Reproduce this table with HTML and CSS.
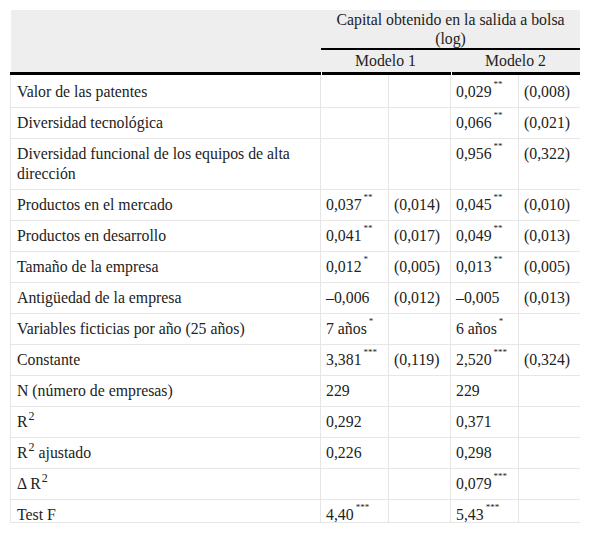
FILE: index.html
```html
<!DOCTYPE html>
<html lang="es">
<head>
<meta charset="utf-8">
<link rel="stylesheet" href="styles.css">
<title>Tabla</title>
</head>
<body>
<div class="wrap">
<table class="tbl">
  <colgroup>
    <col class="c-label"><col class="c-a"><col class="c-b"><col class="c-a"><col class="c-b">
  </colgroup>
  <thead>
    <tr>
      <th class="blank" rowspan="2"></th>
      <th class="group" colspan="4">Capital obtenido en la salida a bolsa<br>(log)</th>
    </tr>
    <tr>
      <th class="model sep" colspan="2">Modelo 1</th>
      <th class="model sep" colspan="2">Modelo 2</th>
    </tr>
  </thead>
  <tbody>
    <tr class="first"><td class="lbl">Valor de las patentes</td><td></td><td></td><td>0,029<sup class="st">**</sup></td><td>(0,008)</td></tr>
    <tr><td class="lbl">Diversidad tecnológica</td><td></td><td></td><td>0,066<sup class="st">**</sup></td><td>(0,021)</td></tr>
    <tr><td class="lbl">Diversidad funcional de los equipos de alta dirección</td><td></td><td></td><td>0,956<sup class="st">**</sup></td><td>(0,322)</td></tr>
    <tr><td class="lbl">Productos en el mercado</td><td>0,037<sup class="st">**</sup></td><td>(0,014)</td><td>0,045<sup class="st">**</sup></td><td>(0,010)</td></tr>
    <tr><td class="lbl">Productos en desarrollo</td><td>0,041<sup class="st">**</sup></td><td>(0,017)</td><td>0,049<sup class="st">**</sup></td><td>(0,013)</td></tr>
    <tr><td class="lbl">Tamaño de la empresa</td><td>0,012<sup class="st">*</sup></td><td>(0,005)</td><td>0,013<sup class="st">**</sup></td><td>(0,005)</td></tr>
    <tr><td class="lbl">Antigüedad de la empresa</td><td>–0,006</td><td>(0,012)</td><td>–0,005</td><td>(0,013)</td></tr>
    <tr><td class="lbl">Variables ficticias por año (25 años)</td><td>7 años<sup class="st">*</sup></td><td></td><td>6 años<sup class="st">*</sup></td><td></td></tr>
    <tr><td class="lbl">Constante</td><td>3,381<sup class="st">***</sup></td><td>(0,119)</td><td>2,520<sup class="st">***</sup></td><td>(0,324)</td></tr>
    <tr><td class="lbl">N (número de empresas)</td><td>229</td><td></td><td>229</td><td></td></tr>
    <tr><td class="lbl">R<sup class="pw">2</sup></td><td>0,292</td><td></td><td>0,371</td><td></td></tr>
    <tr><td class="lbl">R<sup class="pw">2</sup> ajustado</td><td>0,226</td><td></td><td>0,298</td><td></td></tr>
    <tr><td class="lbl">Δ R<sup class="pw">2</sup></td><td></td><td></td><td>0,079<sup class="st">***</sup></td><td></td></tr>
    <tr><td class="lbl">Test F</td><td>4,40<sup class="st">***</sup></td><td></td><td>5,43<sup class="st">***</sup></td><td></td></tr>
  </tbody>
</table>
</div>
</body>
</html>
```

FILE: styles.css
```css
html, body {
  margin: 0;
  padding: 0;
  background: #fff;
}
body {
  padding: 10px;
  font-family: "Liberation Serif", "Times New Roman", serif;
  font-size: 16px;
  color: #222;
}
.wrap {
  width: 570px;
  height: 512px;
  overflow: hidden;
  border-bottom: 1px solid #e6e6e6;
}
.tbl {
  width: 570px;
  table-layout: fixed;
  border-collapse: collapse;
  font-family: "Liberation Serif", "Times New Roman", serif;
  font-size: 15.8px;
}
.c-label { width: 310px; }
.c-a { width: 68px; }
.c-b { width: 62px; }

.tbl thead th {
  background: #eeeeee;
  font-weight: normal;
  text-align: center;
  padding: 0;
  border: none;
}
.tbl th.blank {
  border-bottom: 3px solid #000;
}
.tbl th.group {
  line-height: 19px;
  height: 38px;
  border-bottom: 2px solid #000;
}
.tbl th.model {
  line-height: 20px;
  padding: 1px 0;
  border-bottom: 3px solid #000;
}
.tbl th.sep {
  position: relative;
}
.tbl th.sep::before {
  content: "";
  position: absolute;
  left: 0;
  bottom: -3px;
  width: 1px;
  height: 3px;
  background: #fff;
}
.tbl td {
  border: 1px solid #e6e6e6;
  padding: 5px 5px;
  line-height: 20px;
  text-align: left;
  vertical-align: top;
  white-space: nowrap;
}
.tbl thead + tbody tr:first-child td {
  border-top: none;
  padding-top: 7px;
}
.tbl td.lbl {
  padding-left: 6px;
  white-space: normal;
}
.st {
  font-size: 9px;
  vertical-align: top;
  line-height: 10px;
  position: relative;
  top: -3px;
  margin-left: 2px;
}
.pw {
  font-size: 12px;
  vertical-align: top;
  line-height: 12px;
  position: relative;
  top: -2px;
  margin-left: 1px;
}
```
